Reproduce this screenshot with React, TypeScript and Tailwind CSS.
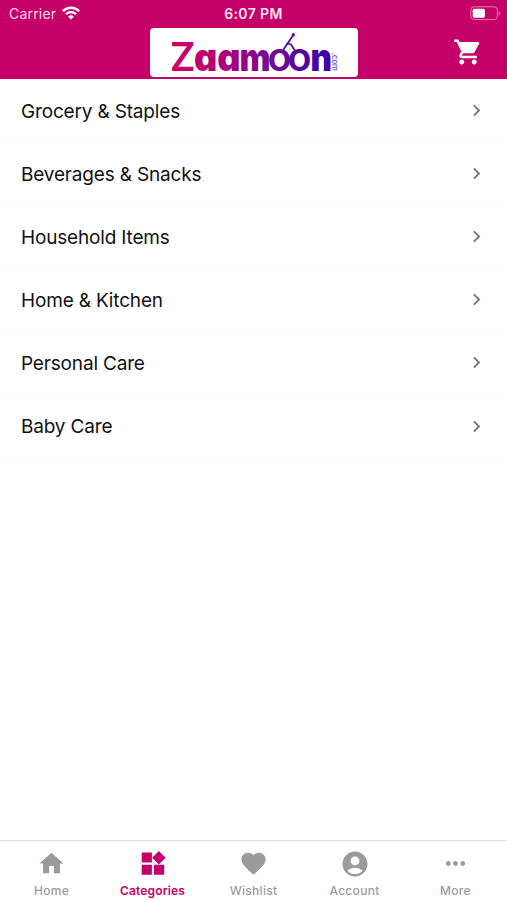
import type { ReactNode } from "react";
import {
  MdAccountCircle,
  MdChevronRight,
  MdFavorite,
  MdHome,
  MdMoreHoriz,
  MdShoppingCart,
} from "react-icons/md";

const categories = [
  "Grocery & Staples",
  "Beverages & Snacks",
  "Household Items",
  "Home & Kitchen",
  "Personal Care",
  "Baby Care",
];

const WifiIcon = () => (
  <svg width="18" height="14" viewBox="0 0 18 14" fill="none" stroke="#fff" strokeWidth="2.3">
    <path d="M.9 5.1a11.5 11.5 0 0 1 16.2 0" />
    <path d="M3.9 8.2a7.3 7.3 0 0 1 10.2 0" />
    <path d="M9 13.6 6.1 10.7a4.1 4.1 0 0 1 5.8 0Z" fill="#fff" stroke="none" />
  </svg>
);

const BatteryIcon = () => (
  <svg width="31" height="15" viewBox="0 0 31 15" fill="none">
    <rect x=".8" y=".8" width="26.6" height="12.8" rx="3.4" stroke="#e57db3" strokeWidth="1" />
    <rect x="2.7" y="2.7" width="12.2" height="9" rx="1.6" fill="#fff" />
    <path d="M28.8 5c2 .8 2 3.6 0 4.4Z" fill="#e57db3" />
  </svg>
);

const WidgetsIcon = () => (
  <svg width="25" height="24" viewBox="0 0 25 24" fill="currentColor" className="mb-[2px] ml-[2px]">
    <path d="M.7 1.5h10.2v10H.7zM.7 13.7h10.2v10H.7zM13 13.7h10.2v10H13zM17.9 0l6.7 6.7-6.7 6.7-6.7-6.7z" />
  </svg>
);

const Logo = () => (
  <svg
    width="208"
    height="49"
    viewBox="150 28 208 49"
    fontFamily="Inter, sans-serif"
    className="overflow-visible rounded-[4px] bg-white"
  >
    <defs>
      <linearGradient id="brand" gradientUnits="userSpaceOnUse" x1="171" y1="0" x2="331" y2="0">
        <stop offset="0" stopColor="#cf0068" />
        <stop offset=".3" stopColor="#b50078" />
        <stop offset=".62" stopColor="#760a96" />
        <stop offset="1" stopColor="#3800a8" />
      </linearGradient>
    </defs>
    <text
      y="70.5"
      fill="url(#brand)"
      fontSize="38"
      fontWeight="900"
      style={{ fontFeatureSettings: '"cv11"' }}
    >
      <tspan x="169.8" fontSize="39.5" fontWeight="600">Z</tspan>
      <tspan x="194" textLength="46.5" lengthAdjust="spacingAndGlyphs">aa</tspan>
      <tspan x="239.5" textLength="31" lengthAdjust="spacingAndGlyphs">m</tspan>
      <tspan x="267.6 287.6" fontSize="39.5" fontWeight="600">oo</tspan>
      <tspan x="310.6" textLength="21.5" lengthAdjust="spacingAndGlyphs">n</tspan>
    </text>
    <g fill="none" stroke="#5908a0" strokeWidth="1.8" strokeLinecap="round">
      <path d="M283.5 49.5 293.3 35" />
      <path d="M287.5 43.5 291 44.5 294.5 50" />
    </g>
    <circle cx="293.3" cy="34.8" r="1.7" fill="#5908a0" />
    <text transform="translate(332 52.8) rotate(90)" fontSize="7.6" fontWeight="500" fill="#6a4bc0">
      .com
    </text>
  </svg>
);

interface TabProps {
  label: string;
  icon: ReactNode;
  active?: boolean;
}

const Tab = ({ label, icon, active }: TabProps) => (
  <button
    className={`flex flex-1 flex-col items-center pt-2 ${active ? "text-[#c60069]" : "text-[#9b9b9b]"}`}
  >
    <span className="flex h-[29px] items-center justify-center">{icon}</span>
    <span
      className={`mt-1 text-[12px] leading-[18px] ${
        active ? "font-semibold tracking-[0.15px]" : "font-medium tracking-[0.3px]"
      }`}
    >
      {label}
    </span>
  </button>
);

export default function App() {
  return (
    <div className="flex h-[900px] w-[507px] flex-col overflow-hidden bg-white font-['Inter',sans-serif]">
      <header className="h-[79px] shrink-0 bg-[#c60069] text-white">
        <div className="grid h-7 grid-cols-3 items-center px-[9px] pb-[2px]">
          <div className="flex items-center gap-[6px] text-[14px] tracking-[0.2px] text-[#ffd9ec]">
            Carrier
            <WifiIcon />
          </div>
          <div className="text-center text-[14px] font-semibold tracking-[0.4px] text-[#ffe6f2]">6:07 PM</div>
          <div className="-mr-[3px] flex justify-end">
            <BatteryIcon />
          </div>
        </div>
        <div className="grid grid-cols-[150px_208px_1fr]">
          <div />
          <Logo />
          <div className="flex items-center justify-end pr-6 pb-[2px]">
            <MdShoppingCart size={30} />
          </div>
        </div>
      </header>

      <main className="flex-1">
        {categories.map((name) => (
          <div
            key={name}
            className="flex h-[63.1px] items-center justify-between border-b border-[#fbfbfb] pt-px pr-[19px] pl-[21px]"
          >
            <span className="pt-[3px] text-[19px] tracking-[-0.17px] text-[#111]">{name}</span>
            <MdChevronRight size={23} className="text-[#777]" />
          </div>
        ))}
      </main>

      <nav className="flex h-[60px] shrink-0 border-t border-[#dedede] bg-white px-px">
        <Tab label="Home" icon={<MdHome size={29} />} />
        <Tab label="Categories" icon={<WidgetsIcon />} active />
        <Tab label="Wishlist" icon={<MdFavorite size={29} />} />
        <Tab label="Account" icon={<MdAccountCircle size={30} />} />
        <Tab label="More" icon={<MdMoreHoriz size={29} />} />
      </nav>
    </div>
  );
}
